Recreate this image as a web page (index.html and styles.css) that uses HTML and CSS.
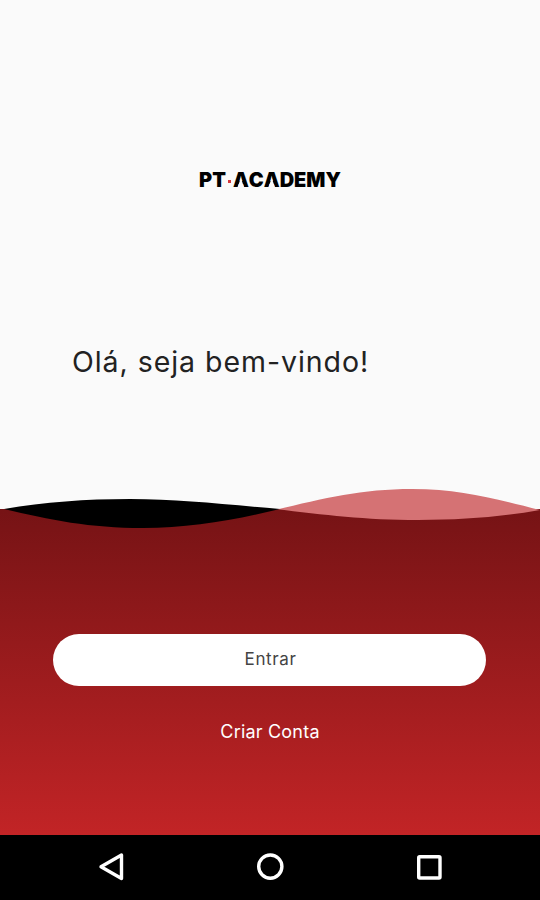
FILE: index.html
```html
<!DOCTYPE html>
<html lang="pt">

<head>
  <meta charset="UTF-8">
  <meta name="viewport" content="width=device-width,initial-scale=1.0">
  <title>PT Academy</title>
  <link rel="stylesheet" href="styles.css">
</head>

<body>
  <div class="app">
    <header class="intro">
      <div class="logo">PT<span class="logo-dot"></span><span class="logo-name"><span class="open-a">A</span>C<span class="open-a">A</span>DEMY</span></div>
      <h1 class="welcome">Olá, seja bem-vindo!</h1>
    </header>

    <main class="actions">
      <!-- waves -->
      <svg class="waves" viewBox="0 0 540 42" aria-hidden="true">
        <path fill="#d57274" d="M275 23 C325 11 362 2 412 2 C462 2 495 12 540 23 C500 30 464 33 418 33 C365 33 325 28 275 22 Z" />
        <path fill="#000" d="M4 22 C45 15 85 12 130 12 C180 12 220 17 280 22 C235 33 190 41 143 41 C90 41 50 33 4 22 Z" />
      </svg>
      <button class="btn btn-primary">Entrar</button>
      <button class="btn btn-link">Criar Conta</button>
    </main>

    <nav class="navbar">
      <svg class="nav-icon" viewBox="0 0 32 32">
        <path d="M26.5 4 V27.5 L6 15.8 Z" />
      </svg>
      <svg class="nav-icon" viewBox="0 0 32 32">
        <circle cx="16.3" cy="15.6" r="11.6" />
      </svg>
      <svg class="nav-icon" viewBox="0 0 32 32">
        <rect x="5.7" y="5.7" width="21.3" height="21.3" rx="1" />
      </svg>
    </nav>
  </div>
</body>

</html>
```

FILE: styles.css
```css
body {
  margin: 0;
  font-family: Inter, "Liberation Sans", sans-serif;
}

.app {
  display: flex;
  flex-direction: column;
  height: 900px;
  background-color: #fafafa;
}

.intro {
  height: 509px;
  display: flex;
  flex-direction: column;
}

.logo {
  display: flex;
  align-items: center;
  justify-content: center;
  margin-top: 168px;
  height: 24px;
  font-size: 20px;
  font-weight: 900;
  color: #000;
}

.logo-dot {
  width: 3px;
  height: 3px;
  margin: 3px 2px 0 2px;
  background-color: #d4373a;
}

/* the A has no crossbar */
.open-a {
  position: relative;
  display: inline-block;
}

.open-a::after {
  content: "";
  position: absolute;
  left: 50%;
  bottom: 4px;
  width: 7px;
  height: 10px;
  margin-left: -3.5px;
  background-color: #fafafa;
  clip-path: polygon(50% 0, 100% 100%, 0 100%);
}

.welcome {
  margin: 152px 0 0 72px;
  font-size: 28.5px;
  line-height: 36px;
  font-weight: 400;
  letter-spacing: 0.95px;
  color: #222;
}

.actions {
  position: relative;
  display: flex;
  flex-direction: column;
  align-items: center;
  height: 326px;
  background: linear-gradient(#761315, #c22426);
}

/* the waves overlap the edge between the two halves */
.waves {
  position: absolute;
  top: -22px;
  left: 0;
  width: 540px;
  height: 42px;
}

.btn {
  border: none;
  padding: 0;
  font-family: inherit;
  cursor: pointer;
}

.btn-primary {
  width: 433px;
  height: 52px;
  margin: 125px 1px 0 0;
  padding: 0 0 2px 2px;
  border-radius: 26px;
  background-color: #fff;
  font-size: 17px;
  letter-spacing: 0.6px;
  color: #444;
}

.btn-link {
  margin-top: 35px;
  background: none;
  font-size: 18px;
  line-height: 22px;
  letter-spacing: 0.2px;
  color: #fff;
}

.navbar {
  display: flex;
  align-items: center;
  justify-content: space-between;
  height: 65px;
  padding: 0 95px 2px;
  box-sizing: border-box;
  background-color: #000;
}

.nav-icon {
  width: 32px;
  height: 32px;
  fill: none;
  stroke: #fff;
  stroke-width: 3.4;
  stroke-linejoin: round;
}
```
